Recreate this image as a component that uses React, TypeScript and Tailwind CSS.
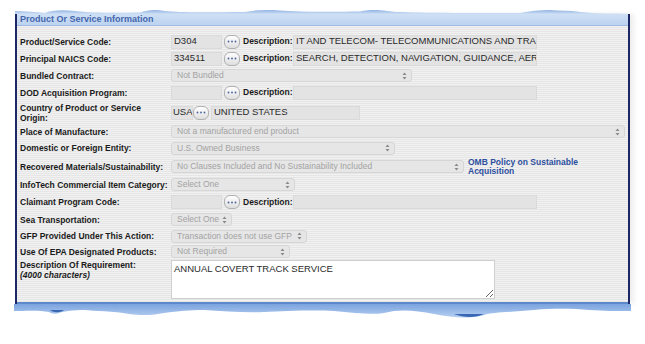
import React from "react";

const stripes =
  "bg-[repeating-linear-gradient(to_bottom,#f1f1f1_0px,#f1f1f1_1px,#e6e6e6_1px,#e6e6e6_2px)]";

function Arrows() {
  return (
    <svg width="5" height="8" viewBox="0 0 5 8" className="shrink-0">
      <path d="M2.5 0.5 L4.5 3 L0.5 3 Z" fill="#8a8a8a" />
      <path d="M2.5 7.5 L4.5 5 L0.5 5 Z" fill="#8a8a8a" />
    </svg>
  );
}

function Dots({ ml = "ml-[2px]" }: { ml?: string }) {
  return (
    <div className={`${ml} w-[16px] h-[14px] shrink-0 rounded-[6px] border border-[#b0b0b0] bg-gradient-to-b from-white to-[#dedede] flex items-center justify-center`}>
      <svg width="10" height="3" viewBox="0 0 10 3">
        <circle cx="1.5" cy="1.5" r="0.9" fill="#4a63a0" />
        <circle cx="5" cy="1.5" r="0.9" fill="#4a63a0" />
        <circle cx="8.5" cy="1.5" r="0.9" fill="#4a63a0" />
      </svg>
    </div>
  );
}

function Input({ w, value, px = "px-[2px]" }: { w: string; value?: string; px?: string }) {
  return (
    <div className={`${w} h-[14px] shrink-0 bg-[#e3e3e3] border border-[#dadada] ${px} flex items-center text-[9.5px] text-[#2a2a2a] whitespace-nowrap overflow-hidden`}>
      {value}
    </div>
  );
}

function Select({ w, value }: { w: string; value: string }) {
  return (
    <div className={`${w} h-[13px] shrink-0 rounded-[3px] bg-[#e6e6e6] border border-[#d6d6d6] pl-[5px] pr-[4px] flex items-center justify-between text-[8.5px] text-[#a3a3a3] whitespace-nowrap overflow-hidden`}>
      <span>{value}</span>
      <Arrows />
    </div>
  );
}

function CodeWithDesc({ code, desc }: { code?: string; desc?: string }) {
  return (
    <div className="flex items-center">
      <Input w="w-[51px]" value={code} />
      <Dots />
      <span className="ml-[3px] w-[50px] text-[8.5px] font-bold text-[#1b1b1b]">Description:</span>
      <Input w="w-[244px]" value={desc} />
    </div>
  );
}

function Row({ h, label, children, top }: { h: string; label: React.ReactNode; children: React.ReactNode; top?: boolean }) {
  return (
    <div className={`flex ${h} ${top ? "items-start" : "items-center"}`}>
      <div className="w-[154px] pl-[3px] shrink-0 text-[8.5px] leading-[10px] font-bold text-[#1b1b1b]">{label}</div>
      <div className="flex items-center">{children}</div>
    </div>
  );
}

function TornTop() {
  return (
    <svg width="615" height="6" viewBox="0 0 615 6" className="block ml-[15px]">
      <defs>
        <linearGradient id="tt" x1="0" y1="0" x2="0" y2="1">
          <stop offset="0" stopColor="#8fb1e2" />
          <stop offset="1" stopColor="#cddff5" />
        </linearGradient>
      </defs>
      <path
        d="M0 6 L0 3 C10 3 20 4 30 5 C36 2 48 1.5 60 3 C75 5 100 5 125 4.5 C132 2 140 1 150 3 C165 5 200 4 230 4 C240 2 250 1.5 265 2.5 C280 4 320 4 345 3.5 C352 2 360 1.5 372 3 C385 5 430 5 505 5 C515 3 525 2 535 2 C545 3 555 2 565 4 C580 6 600 5 615 6 Z"
        fill="url(#tt)"
      />
    </svg>
  );
}

function TornBottom() {
  return (
    <svg width="617" height="16" viewBox="0 0 617 16" className="block ml-[14px]">
      <defs>
        <linearGradient id="tb" x1="0" y1="0" x2="0" y2="1">
          <stop offset="0" stopColor="#7aa3de" />
          <stop offset="1" stopColor="#b6cff2" />
        </linearGradient>
      </defs>
      <path
        d="M0 0 L617 0 L617 7 C600 7 590 7 575 6 C560 5 545 4 520 6 C500 8 480 8 470 11 C455 15 440 14 420 10 C400 6 385 5 370 9 C360 11 340 9 320 7 C300 6 270 7 250 8 C230 9 210 7 190 6 C175 6 165 7 150 9 C140 11 130 12 115 10 C100 7 80 7 70 6 C60 6 50 7 45 9 C42 10 38 10 35 8 C25 6 10 7 0 7 Z"
        fill="url(#tb)"
      />
      <path d="M36 6 C40 9 46 9 50 6 Z" fill="#3a67b3" />
      <path d="M440 10 C450 14 462 14 470 10 Z" fill="#3a67b3" />
    </svg>
  );
}

export default function App() {
  return (
    <div className="w-[645px] h-[344px] bg-white overflow-hidden pt-[8px] font-['Liberation_Sans',Arial,sans-serif]">
      <TornTop />
      <div className="ml-[15px] w-[615px] border-x-2 border-[#1c2866] shadow-[4px_0_5px_rgba(0,0,0,0.07)]">
        <div className="h-[12px] bg-gradient-to-b from-[#cfe0f5] to-[#bcd2ef] border-b border-[#9fbbe3] pl-[3px] flex items-center text-[9px] font-bold text-[#4466ad] leading-none">
          Product Or Service Information
        </div>
        <div className={`${stripes} pt-[7px] h-[276px]`}>
          <Row h="h-[17px]" label="Product/Service Code:">
            <CodeWithDesc code="D304" desc="IT AND TELECOM- TELECOMMUNICATIONS AND TRA" />
          </Row>
          <Row h="h-[17px]" label="Principal NAICS Code:">
            <CodeWithDesc code="334511" desc="SEARCH, DETECTION, NAVIGATION, GUIDANCE, AERC" />
          </Row>
          <Row h="h-[17px]" label="Bundled Contract:">
            <Select w="w-[241px]" value="Not Bundled" />
          </Row>
          <Row h="h-[17px]" label="DOD Acquisition Program:">
            <CodeWithDesc />
          </Row>
          <Row h="h-[23px]" label={<>Country of Product or Service<br />Origin:</>}>
            <Input w="w-[22px]" px="pl-[1px]" value="USA" />
            <Dots ml="ml-0" />
            <div className="ml-[2px]">
              <Input w="w-[149px]" value="UNITED STATES" />
            </div>
          </Row>
          <Row h="h-[15px]" label="Place of Manufacture:">
            <Select w="w-[454px]" value="Not a manufactured end product" />
          </Row>
          <Row h="h-[18px]" label="Domestic or Foreign Entity:">
            <Select w="w-[224px]" value="U.S. Owned Business" />
          </Row>
          <Row h="h-[19px]" label="Recovered Materials/Sustainability:">
            <Select w="w-[293px]" value="No Clauses Included and No Sustainability Included" />
            <a className="ml-[4px] text-[8.5px] leading-[9px] font-bold text-[#2d4f9e]">
              OMB Policy on Sustainable
              <br />
              Acquisition
            </a>
          </Row>
          <Row h="h-[17px]" label="InfoTech Commercial Item Category:">
            <Select w="w-[124px]" value="Select One" />
          </Row>
          <Row h="h-[18px]" label="Claimant Program Code:">
            <CodeWithDesc />
          </Row>
          <Row h="h-[17px]" label="Sea Transportation:">
            <Select w="w-[61px]" value="Select One" />
          </Row>
          <Row h="h-[16px]" label="GFP Provided Under This Action:">
            <Select w="w-[136px]" value="Transaction does not use GFP" />
          </Row>
          <Row h="h-[15px]" label="Use Of EPA Designated Products:">
            <Select w="w-[119px]" value="Not Required" />
          </Row>
          <Row
            h="h-[41px] pt-[1px]"
            top
            label={
              <>
                Description Of Requirement:
                <br />
                <i>(4000 characters)</i>
              </>
            }
          >
            <textarea
              readOnly
              defaultValue="ANNUAL COVERT TRACK SERVICE"
              className="w-[324px] h-[39px] bg-white border border-[#cfcfcf] px-[2px] py-[2px] text-[9.5px] leading-[11px] text-[#2a2a2a] font-['Liberation_Sans',Arial,sans-serif] outline-none"
            />
          </Row>
        </div>
        <div className="h-[2px] bg-[#5d88cb]" />
      </div>
      <TornBottom />
    </div>
  );
}
